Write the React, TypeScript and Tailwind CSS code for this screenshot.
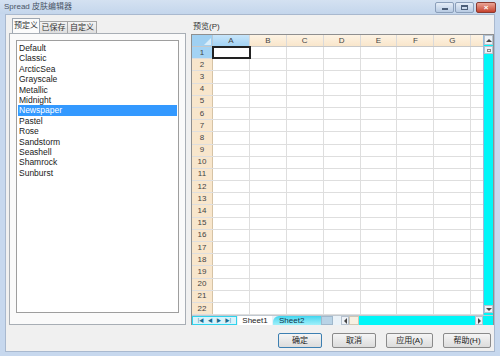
import React from "react";

const font = { fontFamily: '"Liberation Sans", "Noto Sans CJK SC", sans-serif' };

const skins = [
  "Default", "Classic", "ArcticSea", "Grayscale", "Metallic", "Midnight",
  "Newspaper", "Pastel", "Rose", "Sandstorm", "Seashell", "Shamrock", "Sunburst",
];

const cols = ["A", "B", "C", "D", "E", "F", "G"];
const rows = Array.from({ length: 22 }, (_, i) => i + 1);

function TitleBar() {
  return (
    <div className="h-[14px] flex items-center justify-between bg-gradient-to-b from-[#d4e1f1] to-[#c4d6ec]">
      <span className="pl-[4px] text-[8px] text-[#4a5566]">Spread 皮肤编辑器</span>
      <div className="flex items-start h-full pt-[2px] pr-[4px] gap-[1px]">
        <div className="w-[19px] h-[11px] rounded-[2px] border border-[#8b9fba] bg-gradient-to-b from-[#e5edf7] to-[#b8cbe3] flex items-center justify-center">
          <div className="w-[6px] h-[2px] bg-[#4b5e78] mt-[3px]" />
        </div>
        <div className="w-[19px] h-[11px] rounded-[2px] border border-[#8b9fba] bg-gradient-to-b from-[#e5edf7] to-[#b8cbe3] flex items-center justify-center">
          <div className="w-[7px] h-[5px] border border-[#4b5e78] border-t-2" />
        </div>
        <div className="ml-[1px] w-[20px] h-[11px] rounded-[2px] border border-[#8a3a30] bg-gradient-to-b from-[#e9a497] to-[#c6402c] flex items-center justify-center text-white text-[8px] font-bold leading-none">
          ×
        </div>
      </div>
    </div>
  );
}

function LeftPanel() {
  return (
    <div className="w-[177px] flex flex-col">
      <div className="h-[14px] flex items-end pl-[3px] relative z-10">
        <div className="h-[15px] w-[28px] bg-[#fbfbfb] border border-[#9ea7b2] border-b-0 flex items-center justify-center text-[8px] text-[#333]">
          预定义
        </div>
        <div className="h-[12px] w-[28px] bg-gradient-to-b from-[#f3f3f3] to-[#dedede] border border-[#a5a5a5] border-b-0 border-l-0 flex items-center justify-center text-[8px] text-[#333]">
          已保存
        </div>
        <div className="h-[12px] w-[29px] bg-gradient-to-b from-[#f3f3f3] to-[#dedede] border border-[#a5a5a5] border-b-0 border-l-0 flex items-center justify-center text-[8px] text-[#333]">
          自定义
        </div>
      </div>
      <div className="h-[292px] border border-[#a8aeb5] bg-[#fafafa] px-[6px] pt-[6px] pb-[11px]">
        <div className="h-full border border-[#9e9e9e] bg-white p-[1px] pt-[2px]">
          {skins.map((s) => (
            <div
              key={s}
              className={`h-[10.4px] leading-[10.4px] pl-[1px] text-[8.5px] ${
                s === "Newspaper" ? "bg-[#3399ff] text-white" : "text-[#1a1a1a]"
              }`}
            >
              {s}
            </div>
          ))}
        </div>
      </div>
    </div>
  );
}

function Grid() {
  return (
    <div className="h-[291px] w-[303px] border border-[#8f8f8f] bg-white flex flex-col">
      <div className="flex flex-1">
        <div className="flex flex-col w-[291px]">
          {/* header */}
          <div className="flex h-[12px] border-b border-[#c8c8c8]">
            <div className="w-[21px] h-full bg-[#9fd0f2] border-r border-[#b9c9d6] relative">
              <div className="absolute right-[1px] bottom-[1px] w-0 h-0 border-l-[7px] border-l-transparent border-b-[7px] border-b-[#d9edfa]" />
            </div>
            {cols.map((c) => (
              <div
                key={c}
                className={`w-[36.9px] h-full border-r border-[#dadada] flex items-center justify-center text-[8px] text-[#444] ${
                  c === "A" ? "bg-gradient-to-b from-[#c7e5fa] to-[#a3d3f4]" : "bg-gradient-to-b from-[#fdf3e4] to-[#f9e6cb]"
                }`}
              >
                {c}
              </div>
            ))}
            <div className="flex-1 h-full bg-gradient-to-b from-[#fdf3e4] to-[#f9e6cb]" />
          </div>
          {rows.map((r) => (
            <div key={r} className="flex h-[12.2px] border-b border-[#dedede]">
              <div
                className={`w-[21px] h-full border-r border-[#d6c3a5] flex items-center justify-center text-[8px] text-[#444] ${
                  r === 1 ? "bg-[#a3d3f4]" : "bg-[#f8e6cc]"
                }`}
              >
                {r}
              </div>
              {cols.map((c) => (
                <div
                  key={c}
                  className={`w-[36.9px] h-full border-r border-[#dedede] ${
                    r === 1 && c === "A" ? "outline-2 outline-[#222] -outline-offset-1" : ""
                  }`}
                />
              ))}
              <div className="flex-1" />
            </div>
          ))}
        </div>
        {/* vertical scrollbar */}
        <div className="w-[10px] flex flex-col bg-[#00f6f8] border-l border-[#9bd]">
          <div className="h-[10px] bg-[#eef2f7] border border-[#b6c2cf] flex items-center justify-center">
            <div className="w-0 h-0 border-l-[3px] border-l-transparent border-r-[3px] border-r-transparent border-b-[3px] border-b-[#444]" />
          </div>
          <div className="h-[8px] bg-[#eef2f7] border border-[#b6c2cf] mt-[1px] flex items-center justify-center">
            <div className="w-[4px] h-[3px] border border-[#888]" />
          </div>
          <div className="flex-1" />
          <div className="h-[8px] bg-[#eef2f7] border border-[#b6c2cf] flex items-center justify-center mb-[2px]">
            <div className="w-0 h-0 border-l-[3px] border-l-transparent border-r-[3px] border-r-transparent border-t-[3px] border-t-[#444]" />
          </div>
        </div>
      </div>
      {/* bottom bar */}
      <div className="h-[10px] flex items-stretch bg-[#eaf2f8] border-t border-[#c0c8d0]">
        <div className="w-[45px] border border-[#2fd3ec] bg-[#d9f3fb] flex items-center justify-around px-[3px] text-[5px] text-[#1b6b8f] leading-none">
          <span>|◀</span>
          <span>◀</span>
          <span>▶</span>
          <span>▶|</span>
        </div>
        <div className="w-[34px] ml-[1px] bg-white flex items-center justify-center text-[8px] text-[#222]">Sheet1</div>
        <div className="w-[48px] ml-[1px] bg-gradient-to-b from-[#3cd6ef] to-[#9ff0fa] rounded-tl-[6px] flex items-center pl-[6px] text-[8px] text-[#10324a]">
          Sheet2
        </div>
        <div className="w-[12px] bg-[#b9d3e6] border border-[#a0b8cc]" />
        <div className="w-[8px]" />
        <div className="flex-1 flex items-stretch bg-[#00f6f8]">
          <div className="w-[8px] bg-[#eef2f7] border border-[#b6c2cf] flex items-center justify-center">
            <div className="w-0 h-0 border-t-[3px] border-t-transparent border-b-[3px] border-b-transparent border-r-[3px] border-r-[#444]" />
          </div>
          <div className="w-[10px] bg-[#f6f0e2] border border-[#cfc6b4]" />
          <div className="flex-1" />
          <div className="w-[8px] bg-[#eef2f7] border border-[#b6c2cf] flex items-center justify-center">
            <div className="w-0 h-0 border-t-[3px] border-t-transparent border-b-[3px] border-b-transparent border-l-[3px] border-l-[#444]" />
          </div>
          <div className="w-[10px]" />
        </div>
      </div>
    </div>
  );
}

function Btn({ label, primary, w }: { label: string; primary?: boolean; w: string }) {
  return (
    <div
      className={`${w} h-[15px] rounded-[2px] border flex items-center justify-center text-[8px] text-[#222] bg-gradient-to-b from-[#f5f5f5] to-[#dcdcdc] ${
        primary ? "border-[#3c7fb1]" : "border-[#8a8a8a]"
      }`}
    >
      {label}
    </div>
  );
}

export default function App() {
  return (
    <div style={font} className="w-[500px] h-[356px] bg-[#c7d8ee] flex flex-col overflow-hidden">
      <TitleBar />
      <div className="flex-1 mx-[5px] mb-[4px] bg-[#f0f0f0] border border-[#a9b9cf] flex flex-col pl-[3px] pt-[4px]">
        <div className="flex">
          <LeftPanel />
          <div className="ml-[5px] flex flex-col">
            <div className="h-[15px] pl-[2px] flex items-center text-[8px] text-[#333]">预览(P)</div>
            <Grid />
          </div>
        </div>
        <div className="flex justify-end gap-[10px] mt-[8px] pr-[3px]">
          <Btn label="确定" primary w="w-[44px]" />
          <Btn label="取消" w="w-[44px]" />
          <Btn label="应用(A)" w="w-[47px]" />
          <Btn label="帮助(H)" w="w-[48px]" />
        </div>
      </div>
    </div>
  );
}
